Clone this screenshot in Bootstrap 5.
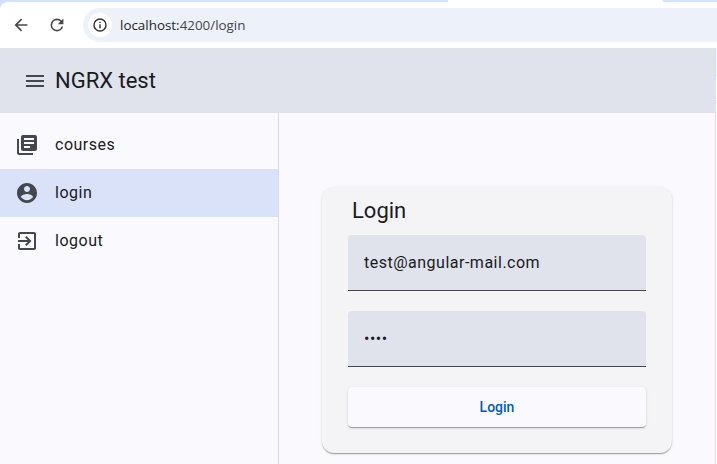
<!DOCTYPE html>
<html lang="en">
<head>
<meta charset="utf-8">
<meta name="viewport" content="width=device-width, initial-scale=1">
<title>NGRX test</title>
<link href="https://cdn.jsdelivr.net/npm/bootstrap@5.3.0/dist/css/bootstrap.min.css" rel="stylesheet">
<style>
body{font-family:Roboto,sans-serif;background:#faf9fd;color:#1a1b1f;height:464px;letter-spacing:0}
svg{display:block;flex:none}
.tab-strip{height:2px;background:#d3e3fd}
.active-tab{height:2px;width:215px;margin-left:448px;background:#fff}
.browser-bar{height:46px;background:#fff;padding:6px 0 6px 13px}
.browser-top{background:linear-gradient(#d3e3fd,#d3e3fd) 0 0/12px 8px no-repeat #fff}
.browser-bar.corner{border-top-left-radius:8px}
.nav-ico{width:16px;height:16px;fill:#474747}
.reload-ico{margin-left:20px}
.url-pill{height:34px;margin-left:18px;padding-left:5px;background:#edf1fa;border-radius:17px 0 0 17px;font:13.4px "Open Sans","Noto Sans",sans-serif;color:#474747}
.url-pill b{font-weight:400;color:#1f1f1f}
.site-info{width:24px;height:24px;border-radius:50%;background:#fff;margin-right:8px}
.app-top{height:65px;background:#e0e2ec;border-top:1px solid #dfe3e3;padding-left:23px;font-size:22px}
.app-name{line-height:28px;margin-bottom:1px}
.viewport-edge{width:2px;border-left:1px solid #d3e3fd;background:linear-gradient(#edf1fa 27px,#d3e3fd 27px 28px,#fff 28px 54px,#d3e3fd 54px 55px,#fff 55px)}
.side{width:279px;border-right:1px solid #dcdce0;padding-top:8px}
.side-item{height:48px;padding-left:15px;font-size:16px;letter-spacing:.5px;color:#1a1b1f;text-decoration:none}
.side-item svg{margin-right:16px;fill:#44474e}
.side-item.current{background:#d9e2f9}
.login-card{width:350px;height:266px;margin:74px 0 0 43px;padding:10px 26px 0;background:#f4f3f6;border-radius:12px;box-shadow:0 2px 1px -1px rgba(0,0,0,.2),0 1px 1px 0 rgba(0,0,0,.14),0 1px 3px 0 rgba(0,0,0,.12)}
.login-title{font-size:22px;line-height:28px;padding-left:4px;margin-bottom:10px;font-weight:400}
.fill-input,.fill-input:focus{height:56px;margin-bottom:20px;border:0;border-bottom:1px solid #44474e;border-radius:4px 4px 0 0;background:#e0e2ec;padding:0 16px;font-size:16px;letter-spacing:.5px;color:#1a1b1f;box-shadow:none}
.raised-btn{height:40px;background:#faf9fd;color:#005cbb;font-size:14px;font-weight:500;border:0;border-radius:4px;box-shadow:0 2px 1px -1px rgba(0,0,0,.2),0 1px 1px 0 rgba(0,0,0,.14),0 1px 3px 0 rgba(0,0,0,.12)}
</style>
</head>
<body class="d-flex flex-column overflow-hidden">
<header class="browser-top">
  <div class="tab-strip"><div class="active-tab"></div></div>
  <div class="browser-bar corner d-flex align-items-center">
    <svg class="nav-ico" viewBox="2 2 20 20"><path d="M20 11H7.830l5.590-5.590L12 4l-8 8 8 8 1.410-1.410L7.830 13H20z"/></svg>
    <svg class="nav-ico reload-ico" viewBox="2 2 20 20"><path d="M17.650 6.350A7.960 7.960 0 0 0 12 4a8 8 0 1 0 7.730 10h-2.080A6 6 0 1 1 12 6c1.660 0 3.140.69 4.220 1.780L13 11h7V4z"/></svg>
    <div class="url-pill d-flex align-items-center flex-grow-1">
      <span class="site-info d-flex align-items-center justify-content-center"><svg width="14" height="14" viewBox="0 0 14 14"><circle cx="7" cy="7" r="6" fill="none" stroke="#333" stroke-width="1.4"/><path d="M6.3 6.2h1.4v4H6.3zM6.3 3.7h1.4v1.4H6.3z" fill="#333"/></svg></span>
      <span><b>localhost:</b>4200/login</span>
    </div>
  </div>
</header>
<div class="d-flex flex-grow-1">
  <div class="d-flex flex-column flex-grow-1">
    <nav class="app-top d-flex align-items-center">
      <svg width="24" height="24" viewBox="0 0 24 24" fill="#44474e"><path d="M3 18h18v-2H3zm0-5h18v-2H3zm0-7v2h18V6z"/></svg>
      <span class="app-name ms-2">NGRX test</span>
    </nav>
    <div class="d-flex flex-grow-1">
      <aside class="side">
        <a href="#" class="side-item d-flex align-items-center"><svg width="24" height="24" viewBox="0 0 24 24"><path d="M4 6H2v14c0 1.100.9 2 2 2h14v-2H4zm16-4H8c-1.100 0-2 .9-2 2v12c0 1.100.9 2 2 2h12c1.100 0 2-.9 2-2V4c0-1.100-.9-2-2-2zm-1 9H9V9h10zm-4 4H9v-2h6zm4-8H9V5h10z"/></svg>courses</a>
        <a href="#" class="side-item current d-flex align-items-center"><svg width="24" height="24" viewBox="0 0 24 24"><path d="M12 2C6.480 2 2 6.480 2 12s4.480 10 10 10 10-4.480 10-10S17.520 2 12 2zm0 3c1.660 0 3 1.340 3 3s-1.340 3-3 3-3-1.340-3-3 1.340-3 3-3zm0 14.200c-2.500 0-4.710-1.280-6-3.220.03-1.990 4-3.080 6-3.080 1.990 0 5.970 1.090 6 3.080-1.290 1.940-3.500 3.220-6 3.220z"/></svg>login</a>
        <a href="#" class="side-item d-flex align-items-center"><svg width="24" height="24" viewBox="0 0 24 24"><path d="M10.090 15.590 11.500 17l5-5-5-5-1.410 1.410L12.670 11H3v2h9.670zM19 3H5c-1.110 0-2 .9-2 2v4h2V5h14v14H5v-4H3v4c0 1.100.89 2 2 2h14c1.100 0 2-.9 2-2V5c0-1.100-.9-2-2-2z"/></svg>logout</a>
      </aside>
      <main class="flex-grow-1">
        <form class="login-card">
          <h1 class="login-title">Login</h1>
          <input class="form-control fill-input" type="text" value="test@angular-mail.com" aria-label="Email">
          <input class="form-control fill-input" type="password" value="test" aria-label="Password">
          <button class="btn raised-btn w-100 d-flex align-items-center justify-content-center" type="button">Login</button>
        </form>
      </main>
    </div>
  </div>
  <div class="viewport-edge"></div>
</div>
<script src="https://cdn.jsdelivr.net/npm/bootstrap@5.3.0/dist/js/bootstrap.bundle.min.js"></script>
</body>
</html>
